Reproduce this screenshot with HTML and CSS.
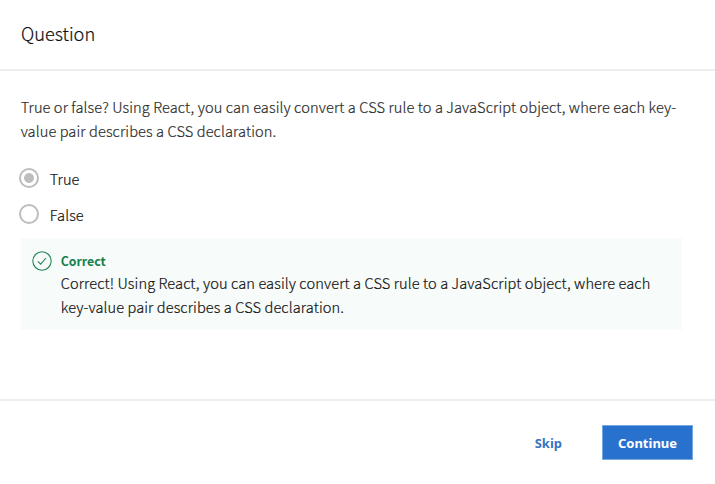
FILE: index.html
```html
<!DOCTYPE html>
<html lang="en">
<head>
<meta charset="utf-8">
<title>Question</title>
<link rel="stylesheet" href="styles.css">
</head>
<body>
<main class="dialog">
  <header class="header"><h1 class="title"><span>Question</span></h1></header>
  <section class="content">
    <p class="prompt"><span>True or false? Using React, you can easily convert a CSS rule to a JavaScript object, where each key-</span><br><span>value pair describes a CSS declaration.</span></p>
    <div class="options">
      <label class="option"><input class="radio" type="radio" name="answer" checked><span>True</span></label>
      <label class="option"><input class="radio" type="radio" name="answer"><span>False</span></label>
    </div>
    <div class="feedback">
      <svg class="check" viewBox="0 0 20 20" fill="none" stroke="currentColor"><circle cx="10" cy="10" r="9.2" stroke-width="1.1"/><path d="M5.8 10.4 8.7 13.2 14 7" stroke-width="1.1"/></svg>
      <div class="message">
        <h2 class="result"><span>Correct</span></h2>
        <p class="explanation"><span>Correct! Using React, you can easily convert a CSS rule to a JavaScript object, where each</span><br><span>key-value pair describes a CSS declaration.</span></p>
      </div>
    </div>
  </section>
  <footer class="footer">
    <button class="button skip">Skip</button>
    <button class="button continue">Continue</button>
  </footer>
</main>
</body>
</html>
```
FILE: styles.css
```css
* { box-sizing: border-box; }
body { margin: 0; background: #fff; color: #111; font-family: "Noto Sans CJK SC", sans-serif; }
h1, h2, p { margin: 0; }
.dialog { height: 484px; display: flex; flex-direction: column; }
.header { height: 71px; padding: 19px 21px 0; border-bottom: 2px solid #ededed; }
.title { font-size: 18.2px; font-weight: 300; line-height: 28px; -webkit-text-stroke: 0.2px; }
.content { height: 328px; padding: 24px 33px 0 20.7px; }
.prompt, .option, .explanation { font-size: 14.6px; font-weight: 300; letter-spacing: 0.107px; -webkit-text-stroke: 0.2px; }
.prompt { line-height: 24px; color: #2b2b2b; white-space: nowrap; }
.options { margin: 17px 0 0 -1.7px; }
.option { display: flex; align-items: center; gap: 10.7px; height: 36px; }
.radio { appearance: none; width: 20px; height: 20px; margin: 0.5px 0 0; border: 2px solid #bdbdbd; border-radius: 50%; }
.radio:checked { background: radial-gradient(circle, #bdbdbd 4.5px, transparent 5.3px); }
.feedback { display: flex; gap: 8.5px; height: 92px; margin-top: 6px; padding: 12px 12px 0 11.5px; background: #f7fbfa; }
.check { flex: none; width: 20px; height: 20px; margin-top: 0.5px; color: #248555; }
.result { padding-top: 2px; font-size: 12.3px; font-weight: 700; line-height: 19px; color: #15804d; }
.explanation { line-height: 24px; white-space: nowrap; }
.footer { flex: 1; display: flex; justify-content: flex-end; align-items: flex-start; gap: 23px; padding: 24px 22px 0; border-top: 2px solid #ededed; }
.button { height: 35px; padding: 0 16px; border: 1px solid transparent; background: none; font: 700 13px "Noto Sans", sans-serif; }
.skip { color: #3974c4; }
.continue { color: #fff; background: #2872cd; border-color: #78a8e1; width: 91px; padding: 0; }
```
